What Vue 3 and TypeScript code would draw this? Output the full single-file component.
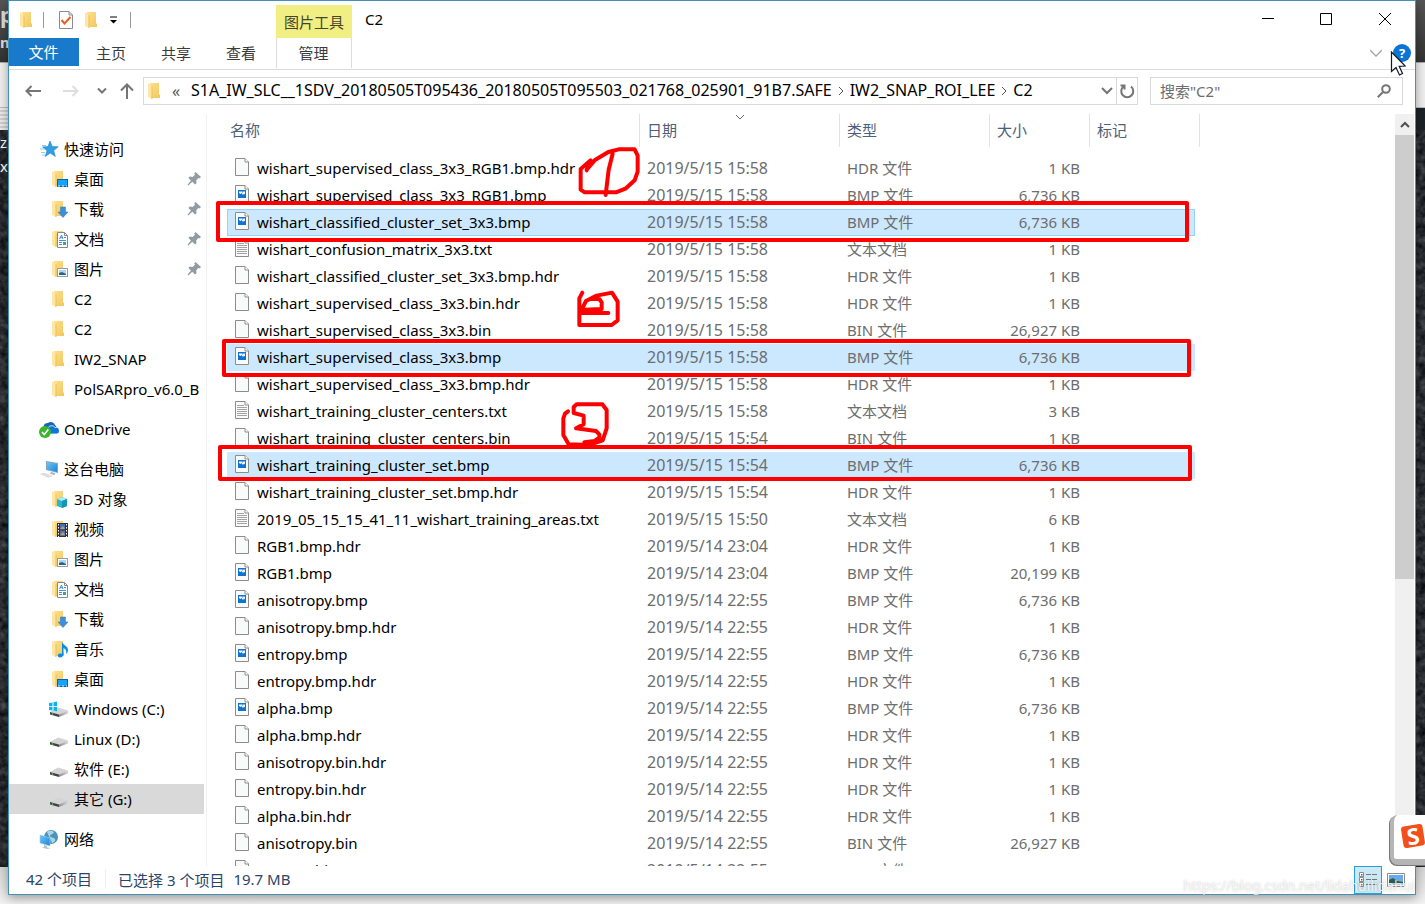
<script setup lang="ts">
import { ref } from 'vue'

interface NavItem {
  label: string
  icon: string
  level: 0 | 1
  pinned?: boolean
  active?: boolean
}

interface FileRow {
  name: string
  date: string
  type: string
  size: string
  icon: string
  state?: 'selected' | 'focused'
}

const tabs: string[] = ['主页', '共享', '查看']
const columns: string[] = ['名称', '日期', '类型', '大小', '标记']
const query = ref('')

const groups: NavItem[][] = [
  [
    { label: '快速访问', icon: 'star', level: 0 },
    { label: '桌面', icon: 'desktop', level: 1, pinned: true },
    { label: '下载', icon: 'download', level: 1, pinned: true },
    { label: '文档', icon: 'documents', level: 1, pinned: true },
    { label: '图片', icon: 'pictures', level: 1, pinned: true },
    { label: 'C2', icon: 'folder', level: 1 },
    { label: 'C2', icon: 'folder', level: 1 },
    { label: 'IW2_SNAP', icon: 'folder', level: 1 },
    { label: 'PolSARpro_v6.0_B', icon: 'folder', level: 1 },
  ],
  [{ label: 'OneDrive', icon: 'onedrive', level: 0 }],
  [
    { label: '这台电脑', icon: 'computer', level: 0 },
    { label: '3D 对象', icon: 'objects', level: 1 },
    { label: '视频', icon: 'videos', level: 1 },
    { label: '图片', icon: 'pictures', level: 1 },
    { label: '文档', icon: 'documents', level: 1 },
    { label: '下载', icon: 'download', level: 1 },
    { label: '音乐', icon: 'music', level: 1 },
    { label: '桌面', icon: 'desktop', level: 1 },
    { label: 'Windows (C:)', icon: 'windrive', level: 1 },
    { label: 'Linux (D:)', icon: 'drive', level: 1 },
    { label: '软件 (E:)', icon: 'drive', level: 1 },
    { label: '其它 (G:)', icon: 'drive', level: 1, active: true },
  ],
  [{ label: '网络', icon: 'network', level: 0 }],
]

function file(name: string, date: string, size: string, state?: FileRow['state']): FileRow {
  const ext = name.slice(name.lastIndexOf('.') + 1)
  const type = ext === 'txt' ? '文本文档' : `${ext.toUpperCase()} 文件`
  const icon = ext === 'txt' ? 'page-text' : ext === 'bmp' ? 'page-image' : 'page'
  return { name, date, type, size: `${size} KB`, icon, state }
}

const files: FileRow[] = [
  file('wishart_supervised_class_3x3_RGB1.bmp.hdr', '2019/5/15 15:58', '1'),
  file('wishart_supervised_class_3x3_RGB1.bmp', '2019/5/15 15:58', '6,736'),
  file('wishart_classified_cluster_set_3x3.bmp', '2019/5/15 15:58', '6,736', 'focused'),
  file('wishart_confusion_matrix_3x3.txt', '2019/5/15 15:58', '1'),
  file('wishart_classified_cluster_set_3x3.bmp.hdr', '2019/5/15 15:58', '1'),
  file('wishart_supervised_class_3x3.bin.hdr', '2019/5/15 15:58', '1'),
  file('wishart_supervised_class_3x3.bin', '2019/5/15 15:58', '26,927'),
  file('wishart_supervised_class_3x3.bmp', '2019/5/15 15:58', '6,736', 'selected'),
  file('wishart_supervised_class_3x3.bmp.hdr', '2019/5/15 15:58', '1'),
  file('wishart_training_cluster_centers.txt', '2019/5/15 15:58', '3'),
  file('wishart_training_cluster_centers.bin', '2019/5/15 15:54', '1'),
  file('wishart_training_cluster_set.bmp', '2019/5/15 15:54', '6,736', 'selected'),
  file('wishart_training_cluster_set.bmp.hdr', '2019/5/15 15:54', '1'),
  file('2019_05_15_15_41_11_wishart_training_areas.txt', '2019/5/15 15:50', '6'),
  file('RGB1.bmp.hdr', '2019/5/14 23:04', '1'),
  file('RGB1.bmp', '2019/5/14 23:04', '20,199'),
  file('anisotropy.bmp', '2019/5/14 22:55', '6,736'),
  file('anisotropy.bmp.hdr', '2019/5/14 22:55', '1'),
  file('entropy.bmp', '2019/5/14 22:55', '6,736'),
  file('entropy.bmp.hdr', '2019/5/14 22:55', '1'),
  file('alpha.bmp', '2019/5/14 22:55', '6,736'),
  file('alpha.bmp.hdr', '2019/5/14 22:55', '1'),
  file('anisotropy.bin.hdr', '2019/5/14 22:55', '1'),
  file('entropy.bin.hdr', '2019/5/14 22:55', '1'),
  file('alpha.bin.hdr', '2019/5/14 22:55', '1'),
  file('anisotropy.bin', '2019/5/14 22:55', '26,927'),
  file('entropy.bin', '2019/5/14 22:55', '26,927'),
]
</script>

<template>
  <div class="screen">
    <svg class="defs" aria-hidden="true">
      <defs>
        <linearGradient id="g-folder" x1="0" y1="0" x2="1" y2="1">
          <stop offset="0" stop-color="#ffe08e" /><stop offset="1" stop-color="#f0c75e" />
        </linearGradient>
        <linearGradient id="g-blue" x1="0" y1="0" x2="1" y2="1">
          <stop offset="0" stop-color="#6cc5f5" /><stop offset="1" stop-color="#1c86dc" />
        </linearGradient>
        <linearGradient id="g-drive" x1="0" y1="0" x2="1" y2="0">
          <stop offset="0" stop-color="#8e8e8e" /><stop offset="1" stop-color="#d8d8da" />
        </linearGradient>
        <filter id="rock" x="0" y="0" width="100%" height="100%" color-interpolation-filters="sRGB">
          <feTurbulence type="fractalNoise" baseFrequency="0.15" numOctaves="4" seed="6" />
          <feColorMatrix values="0.35 0 0 0 -0.015  0.35 0 0 0 0  0.35 0 0 0 0.015  0 0 0 0 1" />
        </filter>
      </defs>
      <symbol id="folder" viewBox="0 0 20 20">
        <path d="M5 2h9v11l1 1v3H5z" fill="url(#g-folder)" />
        <path d="M3 2l4 3v13l-4-2z" fill="#ffe7a3" />
        <path d="M7 5v13" stroke="#e9bf5c" stroke-width="1" />
      </symbol>
      <symbol id="desktop" viewBox="0 0 20 20">
        <use href="#folder" />
        <rect x="8" y="10" width="11" height="8" fill="#0a64ad" />
        <rect x="9" y="11" width="9" height="6" fill="#17a2fb" />
        <path d="M9 17h2M13 17h2M17 17h1" stroke="#d8f0ff" />
      </symbol>
      <symbol id="download" viewBox="0 0 20 20">
        <use href="#folder" />
        <path d="M11.500 8h5v5h2.500l-5 5.500-5-5.500h2.500z" fill="#3c8fdd" stroke="#2a76c2" stroke-width=".5" />
      </symbol>
      <symbol id="documents" viewBox="0 0 20 20">
        <use href="#folder" />
        <path d="M8.500 3.500h7l3 3v12h-10z" fill="#fff" stroke="#8a8a8a" />
        <path d="M15.500 3.500v3h3" fill="none" stroke="#8a8a8a" />
        <path d="M10.500 10l2-4 1.500 4M11 8.700h2.500M15 8.500h2M10 11.500h7M10 13.500h3M10 15.500h3" stroke="#3c93d8" fill="none" />
        <path d="M14 13h3v3h-3z" fill="#4b9e8c" />
      </symbol>
      <symbol id="pictures" viewBox="0 0 20 20">
        <use href="#folder" />
        <rect x="8.500" y="9.500" width="10" height="8" fill="#fff" stroke="#979ca3" />
        <rect x="10" y="11" width="7" height="5" fill="#a9d5f7" />
        <path d="M10 14l3-1 4 2v1h-7z" fill="#2a6580" />
      </symbol>
      <symbol id="objects" viewBox="0 0 20 20">
        <use href="#folder" />
        <path d="M8 10l5-2 5 2v7l-5 2-5-2z" fill="#2cb5cf" />
        <path d="M8 10l5-2 5 2-5 2z" fill="#a8ebf4" />
        <path d="M13 12l5-2v7l-5 2z" fill="#1595b3" />
      </symbol>
      <symbol id="videos" viewBox="0 0 20 20">
        <use href="#folder" />
        <rect x="8" y="4" width="11" height="14" fill="#333" />
        <rect x="11" y="5" width="5" height="5.500" fill="#3d6fd6" />
        <rect x="11" y="11.500" width="5" height="5.500" fill="#4d6fbd" />
        <path d="M11 10l3-3 2 3zM11 16l3-3 2 3z" fill="#d99b32" />
        <path d="M9.500 5v13M17.500 5v13" stroke="#fff" stroke-dasharray="1.500 1.500" />
      </symbol>
      <symbol id="music" viewBox="0 0 20 20">
        <use href="#folder" />
        <path d="M13 3c1 3 6 4 6 8 0 2-1 3-2 4 1-4-1-5-2.500-6v6.500c0 1.500-1.500 3-3.500 3-3 0-3-3.500 0-4 1 0 1.500 0 2 .3z" fill="#0a8ceb" />
      </symbol>
      <symbol id="star" viewBox="0 0 20 20">
        <path d="M11 2l2.200 5.600 6 .2-4.600 3.700 1.700 5.900-5-3.300-5 3.300 1.700-5.800L3.500 8l5.600-.4z" fill="#2f9fe8" stroke="#1d7cc4" stroke-width=".6" />
        <path d="M3 6.500h4M1 10h5M2 13.500h4M3 16h3" stroke="#8fcaf0" />
      </symbol>
      <symbol id="onedrive" viewBox="0 0 20 20">
        <path d="M5 10a4 4 0 0 1 4-6 4.500 4.500 0 0 1 7 2 4 4 0 0 1 .5 6H7z" fill="#1565b8" />
        <path d="M8 15a3.500 3.500 0 0 1 1-6 4 4 0 0 1 7-.5 3.300 3.300 0 0 1 2 6.500z" fill="#0f78d7" stroke="#fff" stroke-width=".8" />
        <circle cx="6" cy="13" r="6" fill="#3cb52d" />
        <path d="M3 13l2.300 2.500 4-5" fill="none" stroke="#fff" stroke-width="1.600" />
      </symbol>
      <symbol id="computer" viewBox="0 0 20 20">
        <path d="M7 2l12 2v10L7 11z" fill="#7ba8c6" />
        <path d="M8 3.200l10 1.700v7.800L8 10.200z" fill="url(#g-blue)" />
        <path d="M12 13l4 1v2l-5-1z" fill="#a8b4bd" />
        <path d="M1 15l5-1 8 3-5 1.500z" fill="#c6ccd1" />
        <path d="M3 15.500l8 2M5 14.800l8 2.200" stroke="#f6f6f6" stroke-width=".6" />
      </symbol>
      <symbol id="drive" viewBox="0 0 20 20">
        <path d="M1 13l8-4.500 10 3-9 4z" fill="#d4d4d6" />
        <path d="M1 13l9 2.500V18l-9-2.500z" fill="#434343" />
        <path d="M10 15.500l9-4v3L10 18z" fill="url(#g-drive)" />
        <circle cx="3.500" cy="15" r=".8" fill="#5ddb55" />
      </symbol>
      <symbol id="windrive" viewBox="0 0 20 20">
        <use href="#drive" />
        <path d="M0 4l3.500-.6v3.800H0zM4.500 3.200L8 2.600v4.600H4.500zM0 8h3.500v3.500L0 11zM4.500 8H8v4.200l-3.500-.6z" fill="#0fb1f2" />
      </symbol>
      <symbol id="network" viewBox="0 0 20 20">
        <circle cx="12" cy="8" r="7" fill="#4a94b8" />
        <path d="M8 3c3-2 5-1 7 0-1 3-4 2-4 4s4 1 5 3-2 4-3 4" fill="#a9d4e6" />
        <path d="M1 6l10 3v8L1 14z" fill="url(#g-blue)" stroke="#9ccbe8" stroke-width=".6" />
        <path d="M5 16l3 1v1.500l4 .5-4 1-5-1.500 2-.5z" fill="#b8c1c7" />
      </symbol>
      <symbol id="pin" viewBox="0 0 14 14">
        <path d="M8.500 0L14 5l-1.600 1.400-1.200-.4-2 2.400.3 2.800L8 12.600 5.300 9.800 1.300 13.500.5 12.800 4 8.500 1.400 5.900l1.400-1.400 2.800.4L8 2.800l-.7-1.400z" fill="#8f9ba5" />
      </symbol>
      <symbol id="page" viewBox="0 0 14 18">
        <path d="M.5.500h9.500l3.500 3.500v13.500H.5z" fill="#f9fafa" stroke="#8c8c8c" />
        <path d="M10 .5V4h3.500" fill="#fff" stroke="#8c8c8c" />
      </symbol>
      <symbol id="page-text" viewBox="0 0 14 18">
        <use href="#page" />
        <path d="M2 4.500h7M2 6.500h10M2 8.500h10M2 10.500h10M2 12.500h10M2 14.500h10" stroke="#a3a3a3" />
      </symbol>
      <symbol id="page-image" viewBox="0 0 14 18">
        <use href="#page" />
        <path d="M3 5h8v8H3z" fill="#0d74d1" />
        <path d="M4 6.500h6V9.500L9 8.500 8 10 6.500 8 5.500 9 4 8z" fill="#fff" />
        <path d="M7.200 6.500h1v1h-1z" fill="#0d74d1" />
      </symbol>
    </svg>

    <div class="backdrop" aria-hidden="true">
      <div class="strip dark"><span class="frag big">p</span><span class="frag">m</span></div>
      <div class="strip light"></div>
      <div class="strip lines"></div>
      <div class="strip stone">
        <svg class="rock"><rect width="100%" height="100%" filter="url(#rock)" /></svg>
        <span class="frag thin">z</span><span class="frag thin">x</span>
      </div>
      <div class="strip pale"></div>
    </div>

    <main class="window">
      <header class="titlebar">
        <div class="quick">
          <svg class="i20"><use href="#folder" /></svg>
          <i class="rule"></i>
          <button class="bare" aria-label="属性">
            <svg class="check" viewBox="0 0 14 18">
              <path d="M.5.500h9.500l3.500 3.500v13.500H.5z" fill="#fff" stroke="#8c8c8c" />
              <path d="M10 .5V4h3.500" fill="none" stroke="#8c8c8c" />
              <path d="M2.500 9l3 3.500L11.500 6" fill="none" stroke="#e8601c" stroke-width="2" />
            </svg>
          </button>
          <button class="bare new" aria-label="新建文件夹"><svg class="i20"><use href="#folder" /></svg></button>
          <button class="bare" aria-label="自定义快速访问工具栏">
            <svg class="drop" viewBox="0 0 8 8"><path d="M0 1h7" stroke="#000" /><path d="M0 4h7L3.500 7.500z" /></svg>
          </button>
          <i class="rule last"></i>
        </div>
        <div class="context">图片工具</div>
        <h1 class="title">C2</h1>
        <div class="controls">
          <button class="bare" aria-label="最小化"><svg viewBox="0 0 12 12"><path d="M0 5.500h12" /></svg></button>
          <button class="bare" aria-label="最大化"><svg viewBox="0 0 12 12"><path d="M.5.500h11v11H.5z" /></svg></button>
          <button class="bare" aria-label="关闭"><svg viewBox="0 0 12 12"><path d="M0 0l12 12M12 0L0 12" /></svg></button>
        </div>
      </header>

      <nav class="ribbon">
        <button class="tab file">文件</button>
        <button v-for="t in tabs" :key="t" class="tab">{{ t }}</button>
        <button class="tab manage">管理</button>
        <button class="bare expand" aria-label="展开功能区">
          <svg viewBox="0 0 12 8"><path d="M0 1l6 6 6-6" fill="none" stroke="#a6a6a6" stroke-width="1.300" /></svg>
        </button>
        <button class="help" aria-label="帮助">?</button>
      </nav>

      <div class="navbar">
        <button class="bare back" aria-label="后退"><svg viewBox="0 0 16 12"><path d="M16 6H1.500M6.500 1l-5 5 5 5" /></svg></button>
        <button class="bare forward" aria-label="前进"><svg viewBox="0 0 16 12"><path d="M0 6h14.500M9.500 1l5 5-5 5" /></svg></button>
        <button class="bare recent" aria-label="最近浏览的位置"><svg viewBox="0 0 10 8"><path d="M1 1.500l4 4 4-4" /></svg></button>
        <button class="bare up" aria-label="上移"><svg viewBox="0 0 14 16"><path d="M7 16V1.500M1 7.500l6-6 6 6" /></svg></button>
        <div class="address">
          <svg class="i20"><use href="#folder" /></svg>
          <span class="laquo">«</span>
          <button class="bare crumb">S1A_IW_SLC__1SDV_20180505T095436_20180505T095503_021768_025901_91B7.SAFE</button>
          <svg class="sep" viewBox="0 0 6 10"><path d="M1 1l4 4-4 4" /></svg>
          <button class="bare crumb">IW2_SNAP_ROI_LEE</button>
          <svg class="sep" viewBox="0 0 6 10"><path d="M1 1l4 4-4 4" /></svg>
          <button class="bare crumb">C2</button>
          <button class="bare history" aria-label="历史记录"><svg viewBox="0 0 12 8"><path d="M1 1l5 5 5-5" /></svg></button>
          <button class="bare refresh" aria-label="刷新">
            <svg viewBox="0 0 16 16"><path d="M4.500 3.500A6 6 0 1 0 12 3.500M1.500 2.500h4v4" /></svg>
          </button>
        </div>
        <label class="search">
          <input v-model="query" type="text" placeholder='搜索"C2"' aria-label="搜索" />
          <svg viewBox="0 0 14 14"><circle cx="9" cy="5" r="3.800" /><path d="M6.300 7.700L.8 13.200" /></svg>
        </label>
      </div>

      <div class="body">
        <aside class="sidebar">
          <ul v-for="(g, gi) in groups" :key="gi">
            <li v-for="(n, ni) in g" :key="ni">
              <a href="#" :class="['node', 'l' + n.level, { active: n.active }]">
                <svg class="i20"><use :href="'#' + n.icon" /></svg>
                <span class="label">{{ n.label }}</span>
                <svg v-if="n.pinned" class="pin"><use href="#pin" /></svg>
              </a>
            </li>
          </ul>
        </aside>

        <section class="list">
          <table>
            <colgroup><col class="c-name" /><col class="c-date" /><col class="c-type" /><col class="c-size" /><col class="c-tag" /></colgroup>
            <thead>
              <tr>
                <th v-for="(c, i) in columns" :key="c" scope="col">
                  <svg v-if="i === 1" class="sort" viewBox="0 0 10 6"><path d="M1 1l4 4 4-4" fill="none" stroke="#6d6d6d" /></svg>
                  {{ c }}
                </th>
              </tr>
            </thead>
            <tbody>
              <tr v-for="f in files" :key="f.name" :class="f.state">
                <td><div class="name"><svg class="page"><use :href="'#' + f.icon" /></svg>{{ f.name }}</div></td>
                <td class="date">{{ f.date }}</td>
                <td>{{ f.type }}</td>
                <td>{{ f.size }}</td>
                <td></td>
              </tr>
            </tbody>
          </table>
        </section>

        <div class="scroll">
          <button class="bare" aria-label="向上滚动"><svg viewBox="0 0 10 8"><path d="M1 6l4-4 4 4" /></svg></button>
          <div class="thumb"></div>
        </div>
      </div>

      <footer class="status">
        <span class="count">42 个项目</span>
        <span class="chosen">已选择 3 个项目</span>
        <span class="bytes">19.7 MB</span>
        <button class="view on" aria-label="详细信息">
          <svg viewBox="0 0 18 16">
            <path d="M.5.500h4v4h-4zM.5 5.500h4v4h-4zM.5 10.500h4v4h-4z" fill="#fff" stroke="#8a8a8a" />
            <path d="M2 2h1.500v1.500H2z" fill="#2477c9" /><path d="M2 7h1.500v1.500H2z" fill="#b33c2a" /><path d="M2 12h1.500v1.500H2z" fill="#b3702a" />
            <path d="M7 2.500h5M13 2.500h5M7 7.500h5M13 7.500h5M7 12.500h5M13 12.500h5" stroke="#777" />
          </svg>
        </button>
        <button class="view" aria-label="大缩略图">
          <svg viewBox="0 0 18 14">
            <path d="M.5.500h17v13H.5z" fill="#fff" stroke="#8d8d8d" />
            <path d="M2 2h14v10H2z" fill="#6aa9ee" /><path d="M2 7l4-2 4 3 6 1v2H2z" fill="#2b6048" /><path d="M2 10h14v2H2z" fill="#9ccdf0" />
          </svg>
        </button>
      </footer>
    </main>

    <svg class="ink" aria-hidden="true">
      <g fill="none" stroke="#fe0000" stroke-width="4" stroke-linejoin="round">
        <rect x="218" y="203" width="969" height="37" />
        <rect x="224" y="341" width="965" height="34" />
        <rect x="220" y="447" width="970" height="32" />
      </g>
      <g transform="translate(540 135) scale(.3333)" fill="none" stroke="#fe0000" stroke-width="12" stroke-linecap="round" stroke-linejoin="round">
        <path d="M140 106L152 76 122 102V164L134 172H228L258 160 284 136 293 110V62L284 43H236L205 51 165 75 140 104M218 56L206 104 197 180" />
        <path d="M127 473L118 490V570H215L233 556V500L216 473 170 482 138 498 128 518M158 492H178L185 502V522L135 524 120 534H205" />
        <path d="M84 829L75 836 70 850V900L86 928 148 930 188 916 200 880V825L187 808H110L101 816V834L131 842V868L108 880 168 888 178 898V908L164 918 133 922" />
      </g>
    </svg>

    <svg class="cursor" viewBox="0 0 16 26" aria-hidden="true">
      <path d="M1.500 1v19.500l4.500-4 3.500 7.500 3-1.500-3.300-7.200 6-.3z" fill="#fff" stroke="#111827" stroke-width="1.200" />
    </svg>

    <div class="ime">
      <svg viewBox="0 0 24 24">
        <rect x="2" y="2" width="20" height="20" rx="3" fill="#f24f1a" transform="rotate(-9 12 12)" />
        <text x="12" y="20" text-anchor="middle" transform="rotate(-9 12 12)">S</text>
      </svg>
    </div>
    <div class="watermark">https://blog.csdn.net/lidahuilidahui</div>
  </div>
</template>

<style>
html, body { margin: 0; overflow: hidden; }
</style>

<style scoped>
* { box-sizing: border-box; }
.screen {
  position: relative;
  height: 100vh;
  padding: 0 9px 9px 8px;
  overflow: hidden;
  font-family: "Noto Sans", "Noto Sans CJK SC", sans-serif;
  font-size: 15px;
  color: #000;
}
.defs { position: absolute; width: 0; height: 0; }
button, input { font: inherit; color: inherit; }
.bare { display: flex; align-items: center; justify-content: center; flex: none; padding: 0; border: 0; background: none; }
svg { display: block; flex: none; }
.i20 { width: 20px; height: 20px; }

.backdrop { position: absolute; inset: 0; display: flex; flex-direction: column; }
.strip { position: relative; overflow: hidden; flex: none; }
.dark { height: 62px; background: linear-gradient(#555, #333); }
.light { height: 46px; background: #efefef; border-top: 1px solid #aaa; border-bottom: 1px solid #bbb; }
.lines { height: 22px; background: linear-gradient(90deg, transparent 9px, #1d2228 9px), repeating-linear-gradient(#ececec 0 2px, #cfcfcf 2px 4px); }
.stone { flex: 1; background: #22272c; }
.pale { height: 37px; background: linear-gradient(#d5d5d5, #f2f2f2); }
.rock { position: absolute; width: 100%; height: 100%; }
.frag { position: relative; display: block; line-height: 28px; color: #ddd; font-weight: 700; }
.frag.big { font-size: 22px; }
.frag.thin { line-height: 24px; font-weight: 400; color: #fff; }

.window {
  position: relative;
  display: flex;
  flex-direction: column;
  height: 100%;
  background: #fff;
  border: 1px solid #4391bb;
  box-shadow: 0 3px 10px rgba(0, 0, 0, .35);
}

.titlebar { display: flex; flex: none; height: 37px; }
.quick { display: flex; align-items: center; width: 267px; padding-left: 8px; }
.rule { width: 1px; height: 16px; margin: 0 15px 0 6px; background: #999; }
.rule.last { margin: 0 0 0 12px; }
.check { width: 14px; height: 18px; }
.new { margin: 0 8px 0 9px; }
.drop { width: 8px; height: 8px; }
.context { width: 76px; margin-top: 4px; background: #f1ef83; color: #45452a; line-height: 34px; text-align: center; }
.title { margin: 0 0 0 13px; font-size: 15px; font-weight: 400; line-height: 36px; }
.controls { display: flex; margin-left: auto; }
.controls button { width: 58px; height: 35px; }
.controls button:last-child { width: 60px; }
.controls svg { width: 12px; height: 12px; fill: none; stroke: #000; stroke-width: 1; }

.ribbon { display: flex; flex: none; align-items: flex-start; height: 32px; border-bottom: 1px solid #dadbdc; }
.tab { width: 65px; height: 30px; padding: 0 1px 0 0; border: 0; background: none; color: #3b3b3b; line-height: 30px; }
.file { width: 70px; height: 28px; background: #1979ca; color: #fff; line-height: 28px; }
.manage { width: 76px; margin-left: 2px; border: solid #dcdcdc; border-width: 0 1px; }
.expand { width: 12px; height: 30px; margin-left: auto; }
.expand svg { width: 12px; height: 8px; }
.help { width: 18px; height: 18px; margin: 6px 4px 0 11px; padding: 0; border: 0; border-radius: 50%; background: #0b74d4; color: #fff; font-weight: 700; font-size: 13px; line-height: 18px; }

.navbar { display: flex; flex: none; align-items: center; height: 42px; padding: 0 12px 0 16px; }
.navbar svg { fill: none; stroke: #757575; stroke-width: 2; }
.back svg, .forward svg { width: 16px; height: 12px; }
.forward { margin-left: 22px; }
.forward svg { stroke: #dedede; }
.recent { margin-left: 18px; }
.recent svg { width: 10px; height: 8px; }
.up { margin-left: 13px; }
.up svg { width: 14px; height: 16px; }
.address { display: flex; flex: 1; align-items: center; min-width: 0; height: 28px; margin-left: 9px; padding-left: 1px; border: 1px solid #d9d9d9; font-size: 16px; line-height: 26px; }
.address .i20 { stroke: none; }
.laquo { width: 26px; padding-left: 7px; color: #555; }
.crumb { height: 26px; padding-bottom: 2px; white-space: nowrap; }
.address .sep { width: 6px; height: 10px; margin: 0 6px; stroke-width: 1; stroke: #555; }
.history { margin-left: auto; width: 18px; }
.history svg { width: 12px; height: 8px; }
.refresh { width: 21px; height: 26px; border-left: 1px solid #d9d9d9; }
.refresh svg { width: 16px; height: 16px; }
.search { display: flex; align-items: center; width: 253px; height: 28px; margin-left: 12px; padding: 0 11px 0 9px; border: 1px solid #d9d9d9; }
.search input { flex: 1; min-width: 0; padding: 0; border: 0; outline: 0; background: none; }
.search input::placeholder { color: #6d6d6d; opacity: 1; }
.search svg { width: 14px; height: 14px; }

.body { display: flex; flex: 1; min-height: 0; padding-top: 2px; }
.sidebar { width: 198px; padding: 20px 2px 0 0; border-right: 1px solid #f0f0f0; overflow: hidden; flex: none; }
.sidebar ul { margin: 0 0 10px; padding: 0; list-style: none; }
.node { display: flex; align-items: center; gap: 5px; height: 30px; color: #000; text-decoration: none; white-space: nowrap; }
.l0 { padding-left: 30px; }
.l1 { padding-left: 40px; }
.active { background: #d9d9d9; }
.label { flex: 1; min-width: 0; overflow: hidden; line-height: 30px; }
.pin { width: 14px; height: 14px; margin-right: 3px; }

.list { flex: 1; min-width: 0; padding-left: 20px; overflow: hidden; }
table { width: 973px; table-layout: fixed; border-collapse: separate; border-spacing: 0; }
.c-name { width: 413px; }
.c-date { width: 200px; }
.c-type { width: 150px; }
.c-size { width: 100px; }
.c-tag { width: 110px; }
thead::after { content: ""; display: block; height: 8px; }
th { position: relative; height: 33px; padding: 0 0 2px 7px; border-right: 1px solid #e2e2e2; color: #4c607a; font-weight: 400; text-align: left; }
th:first-child { padding-left: 3px; }
.sort { position: absolute; top: 0; left: 95px; width: 10px; height: 6px; }
td { height: 27px; padding: 0 0 0 7px; line-height: 26px; vertical-align: top; color: #6d6d6d; white-space: nowrap; }
td:first-child { padding-left: 8px; color: #000; }
td:nth-child(4) { padding: 0 10px 0 0; text-align: right; }
td.date { font-size: 16px; }
.name { display: flex; align-items: center; gap: 8px; height: 26px; }
.page { width: 14px; height: 18px; margin-bottom: 2px; }
.selected td, .focused td { background: #cce8ff; }
.selected td:last-child { background: linear-gradient(#cce8ff, #cce8ff) no-repeat 0 0 / calc(100% - 5px) 100%; }
.focused td { box-shadow: inset 0 1px #99d1ff, inset 0 -1px #99d1ff; }
.focused td:first-child { box-shadow: inset 1px 1px #99d1ff, inset 0 -1px #99d1ff; }
.focused td:last-child {
  background:
    linear-gradient(#cce8ff, #cce8ff) no-repeat 0 1px / calc(100% - 6px) calc(100% - 2px),
    linear-gradient(#99d1ff, #99d1ff) no-repeat 0 0 / calc(100% - 5px) 100%;
  box-shadow: none;
}

.scroll { width: 20px; background: #f0f0f0; border-right: 1px solid #fff; flex: none; }
.scroll button { width: 100%; height: 21px; }
.scroll svg { width: 10px; height: 8px; fill: none; stroke: #505050; stroke-width: 2; }
.thumb { height: 59%; background: #cdcdcd; }

.status { display: flex; flex: none; align-items: center; height: 28px; padding: 0 5px 2px 17px; color: #2b4467; }
.count { width: 80px; border-right: 1px solid #eee; line-height: 20px; }
.chosen { margin-left: 12px; }
.bytes { margin-left: 9px; }
.view { display: flex; align-items: center; justify-content: center; align-self: flex-start; width: 28px; height: 28px; padding: 0; border: 0; background: none; }
.view svg { width: 18px; height: 16px; }
.view.on { margin-left: auto; border: 1px solid #26a0da; background: #cbe8f6; }

.ink { position: absolute; top: 0; left: 0; width: 100%; height: 100%; pointer-events: none; }
.cursor { position: absolute; top: 51px; right: 19px; width: 16px; height: 26px; }
.ime { position: absolute; right: -12px; bottom: 39px; width: 47px; height: 50px; padding: 8px 0 0 6px; border: solid #b5b5b5; border-width: 0 0 6px 4px; border-radius: 8px; background: #fff; box-shadow: -1px 1px #777; }
.ime svg { width: 26px; height: 26px; }
.ime text { fill: #fff; font: 700 21px "Noto Sans", sans-serif; }
.watermark { position: absolute; right: 10px; bottom: 8px; font-size: 14px; line-height: 20px; color: rgba(255, 255, 255, .8); text-shadow: 0 0 2px rgba(0, 0, 0, .25); }
</style>
